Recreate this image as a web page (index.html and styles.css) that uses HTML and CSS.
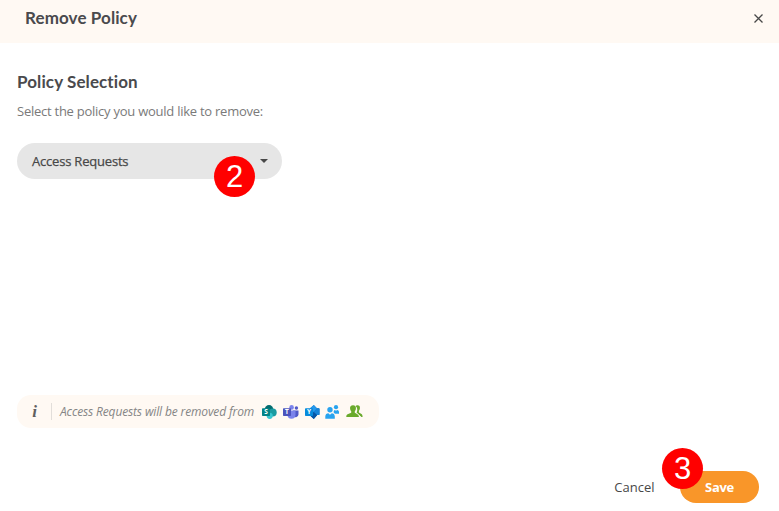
FILE: index.html
```html
<!DOCTYPE html>
<html lang="en">
<head>
<meta charset="utf-8">
<title>Remove Policy</title>
<link rel="stylesheet" href="styles.css">
</head>
<body>
<div class="dialog">
  <header class="header">
    <h1 class="title">Remove Policy</h1>
    <button class="close" aria-label="Close"><svg width="9" height="9" viewBox="0 0 9 9"><path d="M.5.5l8 8M8.5.5l-8 8" fill="none" stroke="#484848" stroke-width="1.3"/></svg></button>
  </header>
  <main class="content">
    <h2 class="subtitle">Policy Selection</h2>
    <p class="hint">Select the policy you would like to remove:</p>
    <div class="select"><span class="value">Access Requests</span><svg width="8" height="4" viewBox="0 0 8 4"><path d="M0 0h8L4 4z" fill="#484848"/></svg><span class="badge badge-select">2</span></div>
    <div class="notice">
      <span class="info">i</span>
      <span class="message">Access Requests will be removed from</span>
      <span class="apps">
        <svg width="15" height="14" viewBox="0 0 15 14"><circle cx="7" cy="4.5" r="4.4" fill="#036c70"/><circle cx="10.8" cy="7.5" r="3.9" fill="#1a9ba1"/><circle cx="7.7" cy="10.8" r="3.1" fill="#37c6d0"/><rect y="3.2" width="8" height="7.7" rx=".7" fill="#038387"/><text class="mark" x="4" y="9.4">S</text></svg>
        <svg width="16" height="14" viewBox="0 0 16 14"><circle cx="13.4" cy="3" r="1.7" fill="#5059c9"/><path d="M10 5.4h5.5v4.1a2.8 2.8 0 0 1-5 1.6z" fill="#5059c9"/><circle cx="8.6" cy="2.4" r="2.3" fill="#7b83eb"/><path d="M4.5 5.4h8v4.4a4 4 0 0 1-8 0z" fill="#7b83eb"/><rect y="3.2" width="8" height="7.7" rx=".7" fill="#4b53bc"/><text class="mark" x="4" y="9.4">T</text></svg>
        <svg width="15" height="14" viewBox="0 0 15 14"><path d="M8.8 0L12 3.2h1.8q.7 0 .7.7v5.3q0 .7-.7.7H12L8.8 14 5 10.5V3.2z" fill="#106ebe"/><path d="M8.8 0L12 3.5 8.8 7 5 3.5z" fill="#2799ec"/><path d="M12 3.3h1.8q.7 0 .7.7v5.2q0 .7-.7.7H12L8.8 7z" fill="#1683d8"/><path d="M8.8 14l3.4-3.7L8.8 7 5 10.5z" fill="#0756a6"/><rect y="3.2" width="8" height="7.7" rx=".7" fill="#078bdc"/><text class="mark" x="4" y="9.4">Y</text></svg>
        <svg width="15" height="14" viewBox="0 0 15 14" fill="#28a3ef"><circle cx="5" cy="4.8" r="2.7"/><path d="M.3 13.7v-2.2c0-2.1 1.4-3.3 3-3.3L5 9.7l1.8-1.5c1.7 0 3 1.2 3 3.3v2.2z"/><circle cx="11" cy="2.2" r="2.1"/><path d="M8.7 7.4c-.2-1.6.5-2.4 1.2-2.5l1.1.8 1.3-.8c1 .1 1.7 1 1.7 2.2v1.7h-3.4c-.7 0-1.2-.6-1.9-1.4z"/></svg>
        <svg width="17" height="13" viewBox="0 0 17 13" fill="#6aaa2c"><path d="M9.5 1.2c.5-.8 1.2-1 2-1 1.8 0 2.7 1.2 2.4 3.2-.1 1.1-.5 1.7-1 2.3v1.8l2.6 1.6c.7.5 1 1.3 1.1 2.8h-1.2L10.4 7.7c.7-1 1-2.4.8-3.8-.1-1.3-.8-2.2-1.7-2.7z"/><path d="M7 .2c2.2 0 3.2 1.4 2.9 3.5-.1 1.3-.6 2-1.1 2.6v1.5l2.8 1.5c1 .5 1.2 1.3 1.3 2.7H.3c0-1.5.3-2.3 1.3-2.7l3.6-1.5V6.3c-.6-.6-1-1.4-1.1-2.6C3.8 1.6 4.8.2 7 .2z"/><path d="M10.2 7.5l4.3 4.2" fill="none" stroke="#fff9f3" stroke-width=".8"/></svg>
      </span>
    </div>
  </main>
  <footer class="actions">
    <button class="cancel">Cancel</button>
    <button class="save">Save<span class="badge badge-save">3</span></button>
  </footer>
</div>
</body>
</html>
```
FILE: styles.css
```css
* { box-sizing: border-box; }
body { margin: 0; background: #fff; font-family: "Open Sans", "Noto Sans", sans-serif; font-size: 13px; color: #484848; }
button { border: 0; padding: 0; background: none; font: inherit; color: inherit; }
svg { display: block; flex: none; }
h1, h2, p { margin: 0; white-space: nowrap; }
.dialog { height: 511px; display: flex; flex-direction: column; overflow: hidden; }
.header { height: 43px; padding: 0 16px 6px 25px; display: flex; align-items: center; justify-content: space-between; background: #fff9f3; }
.title, .subtitle { font: 700 17px/24px Lato, sans-serif; letter-spacing: .1px; color: #4a4a4d; }
.title { padding-bottom: 2px; }
.close { height: 9px; }
.content { flex: 1; padding: 27px 17px 0; }
.hint { margin-top: 7px; line-height: 20px; font-size: 13px; letter-spacing: -.25px; color: #7a7a7a; }
.select { position: relative; width: 265px; height: 36px; margin-top: 22px; padding: 0 14px 0 15px; display: flex; align-items: center; justify-content: space-between; border-radius: 18px; background: #e6e6e6; }
.value { letter-spacing: -.2px; -webkit-text-stroke: .25px #484848; }
.badge { position: absolute; width: 41px; height: 41px; border-radius: 50%; background: #f00; color: #fff; font: 400 31px/41px "Liberation Sans", sans-serif; letter-spacing: 0; text-align: center; }
.badge-select { left: 197px; top: 13px; }
.badge-save { left: -18px; top: -23px; }
.notice { width: 362px; height: 33px; margin-top: 216px; display: flex; align-items: center; border-radius: 14px; background: #fff9f3; white-space: nowrap; }
.info { width: 35px; height: 17px; padding-left: 1px; border-right: 1px solid #e2deda; text-align: center; font: italic 700 17px/17px "Liberation Serif", serif; color: #606060; }
.message { width: 202px; padding-left: 8px; font-size: 12px; font-style: italic; letter-spacing: -.14px; color: #858585; }
.apps { display: flex; align-items: center; gap: 5.6px; margin-left: 8.4px; }
.mark { font: 700 6.5px "Open Sans", sans-serif; fill: #fff; text-anchor: middle; }
.actions { height: 40px; padding-right: 20px; display: flex; justify-content: flex-end; align-items: flex-start; }
.cancel { height: 32px; margin-right: 25.5px; }
.save { position: relative; width: 79px; height: 32px; border-radius: 16px; background: #f99629; color: #fff; font-weight: 700; letter-spacing: -.3px; }
```
